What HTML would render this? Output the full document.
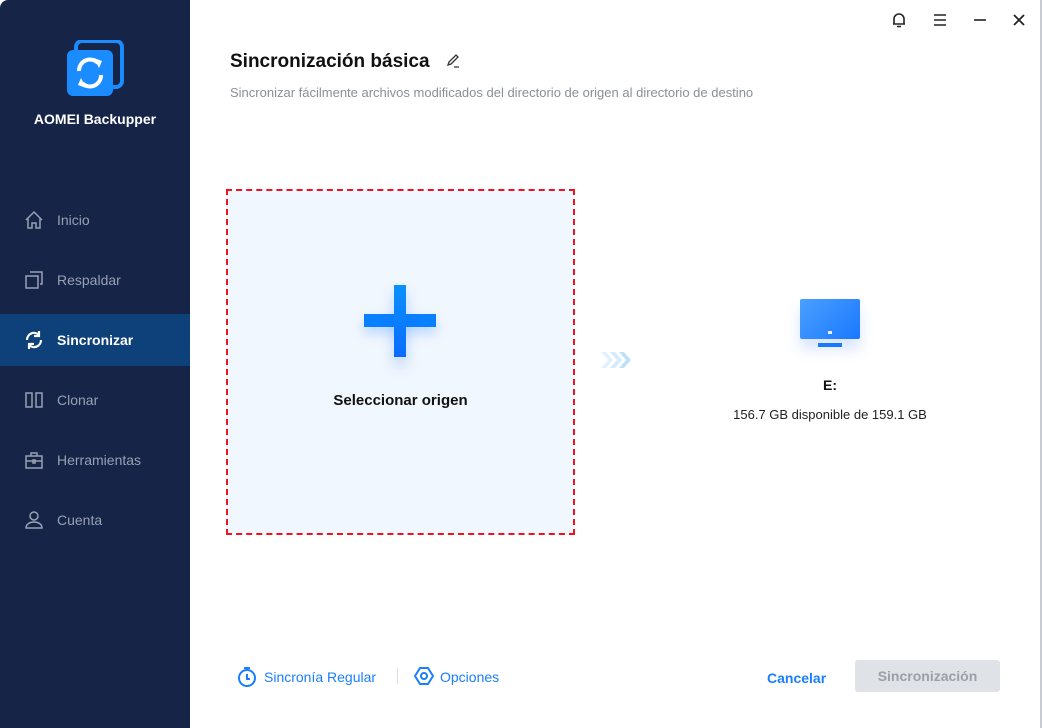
<!DOCTYPE html>
<html><head><meta charset="utf-8"><style>
*{margin:0;padding:0;box-sizing:border-box}
body{width:1042px;height:728px;overflow:hidden;font-family:"Liberation Sans","DejaVu Sans",sans-serif;background:#fff;position:relative}
.side{position:absolute;left:0;top:0;width:190px;height:728px;background:#152447;border-top-left-radius:8px}
.logo{position:absolute;left:66px;top:40px}
.brand{position:absolute;left:0;width:190px;top:111px;text-align:center;color:#fff;font-weight:bold;font-size:14px}
.nav{position:absolute;left:0;width:190px;height:52px;display:flex;align-items:center;color:#98a1b3;font-size:14px}
.nav svg{position:absolute;left:24px}
.nav span{position:absolute;left:57px}
.nav.act{background:#0e4079;color:#fff}
.main{position:absolute;left:190px;top:0;right:0;bottom:0;border-right:2px solid #c8ccd2}
.abs{position:absolute}
</style></head><body>
<div class="side">
 <svg class="logo" width="58" height="58" viewBox="0 0 58 58">
  <rect x="10" y="1" width="46" height="46" rx="6" fill="none" stroke="#1a8cff" stroke-width="4"/>
  <rect x="1" y="10" width="46" height="46" rx="6" fill="#1a8cff"/>
  <path d="M13 31a11 11 0 0 1 19-8" fill="none" stroke="#fff" stroke-width="4"/>
  <path d="M28 18l8 3-3 7z" fill="#fff"/>
  <path d="M35 35a11 11 0 0 1-19 8" fill="none" stroke="#fff" stroke-width="4"/>
  <path d="M20 48l-8-3 3-7z" fill="#fff"/>
 </svg>
 <div class="brand">AOMEI Backupper</div>
 <div class="nav" style="top:194px"><svg width="20" height="20" viewBox="0 0 20 20" fill="none" stroke="#98a1b3" stroke-width="1.5"><path d="M2 10L10 2l8 8M4 8v10h4v-5h4v5h4V8"/></svg><span>Inicio</span></div>
 <div class="nav" style="top:254px"><svg width="20" height="20" viewBox="0 0 20 20" fill="none" stroke="#98a1b3" stroke-width="1.5"><rect x="2" y="6" width="12" height="12"/><path d="M6 2h12v12h-2"/></svg><span>Respaldar</span></div>
 <div class="nav act" style="top:314px"><svg width="20" height="20" viewBox="0 0 20 20" fill="none" stroke="#fff" stroke-width="2.2"><path d="M3 10a7 7 0 0 1 12-5"/><path d="M17 10a7 7 0 0 1-12 5"/><path d="M15 1v5h-5" /><path d="M5 19v-5h5"/></svg><span style="font-weight:bold">Sincronizar</span></div>
 <div class="nav" style="top:374px"><svg width="20" height="20" viewBox="0 0 20 20" fill="none" stroke="#98a1b3" stroke-width="1.5"><rect x="2" y="3" width="6" height="14"/><rect x="12" y="3" width="6" height="14"/></svg><span>Clonar</span></div>
 <div class="nav" style="top:434px"><svg width="20" height="20" viewBox="0 0 20 20" fill="none" stroke="#98a1b3" stroke-width="1.5"><rect x="2" y="6" width="16" height="12"/><path d="M7 6V3h6v3M2 11h16M9 10h2v3H9z"/></svg><span>Herramientas</span></div>
 <div class="nav" style="top:494px"><svg width="20" height="20" viewBox="0 0 20 20" fill="none" stroke="#98a1b3" stroke-width="1.5"><circle cx="10" cy="6" r="4"/><path d="M2 18c0-4 4-6 8-6s8 2 8 6z"/></svg><span>Cuenta</span></div>
</div>
<div class="main">
 <svg class="abs" style="left:701px;top:12px" width="16" height="16" viewBox="0 0 16 16" fill="none" stroke="#222" stroke-width="1.6"><path d="M3 12V7a5 5 0 0 1 10 0v5zM2 12h12M6 14.5h4"/></svg>
 <svg class="abs" style="left:742px;top:12px" width="16" height="16" viewBox="0 0 16 16" stroke="#222" stroke-width="1.6"><path d="M2 3h12M2 8h12M2 13h12"/></svg>
 <svg class="abs" style="left:782px;top:12px" width="16" height="16" viewBox="0 0 16 16" stroke="#222" stroke-width="1.6"><path d="M2 8h12"/></svg>
 <svg class="abs" style="left:821px;top:12px" width="16" height="16" viewBox="0 0 16 16" stroke="#222" stroke-width="1.8"><path d="M3 3l10 10M13 3L3 13"/></svg>
 <div class="abs" style="left:40px;top:51px;font-size:19px;font-weight:bold;color:#111">Sincronización básica</div>
 <svg class="abs" style="left:255px;top:53px" width="16" height="16" viewBox="0 0 16 16" fill="none" stroke="#333" stroke-width="1.3"><path d="M3 12l1-3 7-7 2 2-7 7zM9 14h5"/></svg>
 <div class="abs" style="left:40px;top:85px;font-size:13px;color:#8a8f98">Sincronizar fácilmente archivos modificados del directorio de origen al directorio de destino</div>
 <div class="abs" style="left:36px;top:189px;width:349px;height:346px;border:2px dashed #f0131e;background:#f1f7fe"></div>
 <div class="abs" style="left:174px;top:314px;width:72px;height:13px;background:#0a7fff;box-shadow:0 6px 12px rgba(10,110,255,.25)"></div>
 <div class="abs" style="left:204px;top:285px;width:12px;height:72px;background:linear-gradient(#0a90ff,#0a6cff);box-shadow:0 8px 14px rgba(10,110,255,.25)"></div>
 <div class="abs" style="left:36px;width:349px;top:392px;text-align:center;font-size:15px;font-weight:bold;color:#111">Seleccionar origen</div>
 <svg class="abs" style="left:410px;top:351px" width="32" height="18" viewBox="0 0 32 18"><path d="M1 1h5l7 8-7 8H1l7-8z" fill="#e3f1fd"/><path d="M10 1h5l7 8-7 8h-5l7-8z" fill="#d2eafc"/><path d="M19 1h5l7 8-7 8h-5l7-8z" fill="#bfe0fa"/></svg>
 <div class="abs" style="left:610px;top:299px;width:60px;height:40px;background:linear-gradient(135deg,#4aa0ff,#1a78ff);border-radius:2px;box-shadow:0 10px 14px rgba(40,110,255,.18)"></div>
 <div class="abs" style="left:638px;top:331px;width:4px;height:3px;background:#e6f0ff"></div>
 <div class="abs" style="left:628px;top:343px;width:24px;height:4px;background:#1a78ff"></div>
 <div class="abs" style="left:540px;width:200px;top:377px;text-align:center;font-size:14px;font-weight:bold;color:#111">E:</div>
 <div class="abs" style="left:520px;width:240px;top:407px;text-align:center;font-size:13px;color:#222">156.7 GB disponible de 159.1 GB</div>
 <svg class="abs" style="left:47px;top:666px" width="20" height="22" viewBox="0 0 20 22" fill="none" stroke="#1a7fff" stroke-width="2"><path d="M7 2h6"/><circle cx="10" cy="12" r="8"/><path d="M10 8v5h3"/></svg>
 <div class="abs" style="left:74px;top:669px;font-size:14px;color:#1a7fff">Sincronía Regular</div>
 <div class="abs" style="left:207px;top:668px;width:1px;height:16px;background:#dde1e6"></div>
 <svg class="abs" style="left:224px;top:666px" width="20" height="20" viewBox="0 0 20 20" fill="none" stroke="#1a7fff" stroke-width="2"><path d="M6 2h8l5 8-5 8H6l-5-8z"/><circle cx="10" cy="10" r="3"/></svg>
 <div class="abs" style="left:250px;top:669px;font-size:14px;color:#1a7fff">Opciones</div>
 <div class="abs" style="left:577px;top:670px;font-size:14px;font-weight:bold;color:#1a7fff">Cancelar</div>
 <div class="abs" style="left:665px;top:660px;width:145px;height:32px;background:#dfe2e7;border-radius:3px;text-align:center;line-height:32px;font-size:14px;font-weight:bold;color:#9aa0a8">Sincronización</div>
</div>
</body></html>
